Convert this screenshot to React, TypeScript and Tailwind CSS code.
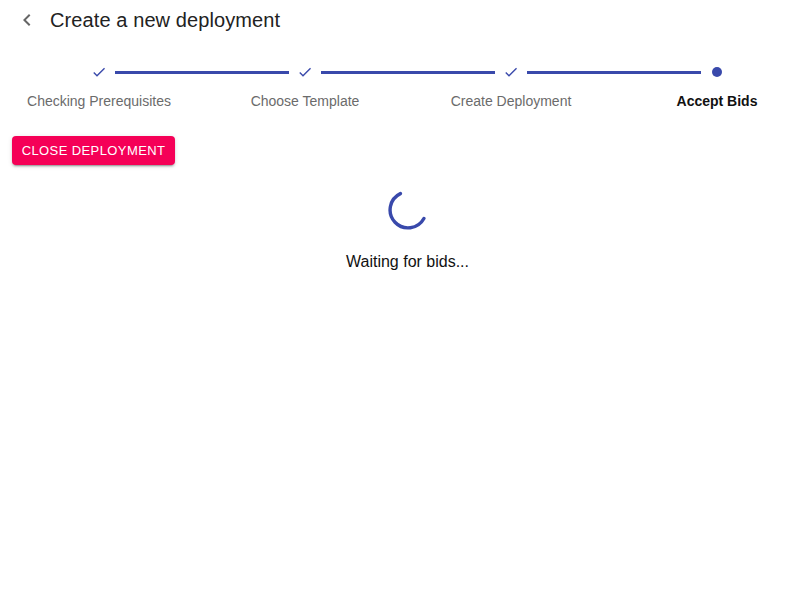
import React from "react";

const steps = [
  { label: "Checking Prerequisites", done: true },
  { label: "Choose Template", done: true },
  { label: "Create Deployment", done: true },
  { label: "Accept Bids", done: false },
];

export default function App() {
  return (
    <div className="w-[809px] h-[614px] bg-white overflow-hidden text-[#212121]" style={{ fontFamily: '"Liberation Sans", Arial, sans-serif' }}>
      <div className="flex items-center h-[40px] pl-[15px]">
        <svg width="24" height="24" viewBox="0 0 24 24" className="text-[#666]">
          <path d="M15.41 7.41L14 6l-6 6 6 6 1.41-1.41L10.83 12z" fill="currentColor" />
        </svg>
        <h1 className="ml-[11px] text-[20px] leading-[24px] tracking-[0.1px] text-[#222]">Create a new deployment</h1>
      </div>

      <div className="ml-[-4px] w-[824px] flex mt-[21px]">
        {steps.map((s, i) => (
          <div key={i} className="relative w-[206px] flex flex-col items-center">
            {i > 0 && (
              <div className="absolute top-[10px] left-[calc(-50%+16px)] right-[calc(50%+16px)] h-[3px] bg-[#3949ab]" />
            )}
            <div className="h-[22px] flex items-center justify-center">
              {s.done ? (
                <svg width="16" height="16" viewBox="0 0 24 24">
                  <path d="M9 16.17L4.83 12l-1.42 1.41L9 19 21 7l-1.41-1.41z" fill="#3949ab" />
                </svg>
              ) : (
                <div className="w-[10px] h-[10px] rounded-full bg-[#3949ab]" />
              )}
            </div>
            <div className={`mt-[10px] text-[14px] leading-[16px] ${s.done ? "text-[#6b6b6b]" : "text-[#111] font-bold"}`}>
              {s.label}
            </div>
          </div>
        ))}
      </div>

      <div className="flex pl-[12px] mt-[27px]">
        <button className="flex items-center justify-center whitespace-nowrap h-[29px] w-[163px] rounded-[4px] bg-[#f50057] text-white text-[13px] tracking-[0.4px] uppercase shadow-[0_3px_1px_-2px_rgba(0,0,0,0.2),0_2px_2px_0_rgba(0,0,0,0.14),0_1px_5px_0_rgba(0,0,0,0.12)]">
          Close deployment
        </button>
      </div>

      <div className="flex flex-col items-center mt-[24px] ml-[6px]">
        <svg width="42" height="42" viewBox="0 0 42 42">
          <path
            d="M 13.4 4.6 A 18 18 0 1 0 36.9 29.5"
            fill="none"
            stroke="#3949ab"
            strokeWidth="3.4"
            strokeLinecap="round"
          />
        </svg>
        <div className="mt-[21px] text-[16px] leading-[20px] text-[#111]">Waiting for bids...</div>
      </div>
    </div>
  );
}
